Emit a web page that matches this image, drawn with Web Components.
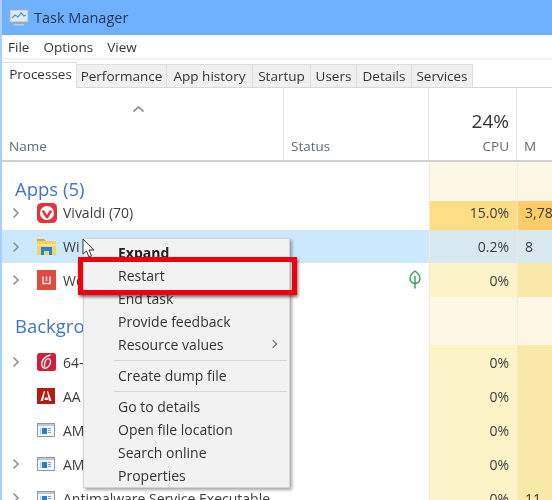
<!DOCTYPE html>
<html>
<head>
<meta charset="utf-8">
<title>Task Manager</title>
<style>
html,body{margin:0;padding:0;background:#fff;}
body{width:552px;height:500px;overflow:hidden;font-family:"Open Sans","Noto Sans",sans-serif;}
</style>
</head>
<body>
<tm-window>
  <tm-titlebar>Task Manager</tm-titlebar>
  <tm-menubar></tm-menubar>
  <tm-tabs></tm-tabs>
  <tm-header></tm-header>
  <tm-group label="Apps (5)" h="39" pad="14" cpu="#fdf7e6" mem="#fdf7e6"></tm-group>
  <tm-row h="29" lift="6" icon="vivaldi" name="Vivaldi (70)" arrow cpu-val="15.0%" mem-val="3,78" cpu="#fedd84" mem="#fdcc68"></tm-row>
  <tm-row h="33" icon="folder" name="Wi" arrow selected cpu-val="0.2%" mem-val="8" cpu="#d7e8ee" mem="#d7e8ee"></tm-row>
  <tm-row h="34" icon="square" name="We" arrow leaf cpu-val="0%" cpu="#fdf3c8" mem="#f9e9a8"></tm-row>
  <tm-group label="Backgro" h="48" pad="16" cpu="#fdf7e6" mem="#fdf7e6"></tm-group>
  <tm-row h="34" icon="red" name="64-" arrow cpu-val="0%" cpu="#fdf3c8" mem="#f9e9a8"></tm-row>
  <tm-row h="34" icon="adobe" name="AA" cpu-val="0%" cpu="#fdf3c8" mem="#f9e9a8"></tm-row>
  <tm-row h="34" icon="service" name="AM" cpu-val="0%" cpu="#fdf3c8" mem="#f9e9a8"></tm-row>
  <tm-row h="34" icon="service" name="AM" arrow cpu-val="0%" cpu="#fdf3c8" mem="#f9e9a8"></tm-row>
  <tm-row h="34" icon="service" name="Antimalware Service Executable" arrow cpu-val="0%" mem-val="11" cpu="#fdf3c8" mem="#f9e9a8"></tm-row>
  <tm-context-menu></tm-context-menu>
  <tm-highlight></tm-highlight>
  <tm-cursor></tm-cursor>
</tm-window>
<script>
const ICONS = {
    vivaldi: '<svg width="20" height="20" viewBox="0 0 20 20"><rect width="20" height="20" rx="4.500" fill="#e4333f"/><circle cx="10" cy="10" r="7" fill="#fff"/><path d="M6.200 7.300c1.200 0 1.600 1 2.100 1.900l1.700 2.800 1.700-2.800c.5-.9.500-1.900 1.900-1.900 1 0 1.500 1 1 2l-3.300 5.500c-.6 1-2 1-2.600 0L5.300 9.300c-.5-1 0-2 .9-2z" fill="#e4333f"/></svg>',
    folder: '<svg width="19" height="16" viewBox="0 0 19 16"><path d="M0 0h7l2 2h10v14H0z" fill="#f6d264"/><path d="M0 0h7l2 2H0z" fill="#dca832"/><path d="M0 5h19v2H0z" fill="#fbe59a"/><path d="M4 8h11v8h-3v-4H7v4H4z" fill="#1d86d8"/></svg>',
    square: '<svg width="19" height="20" viewBox="0 0 19 20"><rect width="19" height="20" fill="#dc4c3f"/><path d="M6 6.500v7h7v-7M9.500 6.500v4.500" fill="none" stroke="#f8e3e0" stroke-width="1.500"/></svg>',
    red: '<svg width="19" height="18" viewBox="0 0 19 18"><rect width="19" height="18" rx="2.500" fill="#cf1f3f"/><path d="M13.500 2C8 3 3.500 8 5 13c.7 2.500 4 3 6 1 2.500-2.500 3.500-6.500 1.500-8C10 4.500 7 8 7.500 14" fill="none" stroke="#fff" stroke-width="1.300"/></svg>',
    adobe: '<svg width="18" height="16" viewBox="0 0 18 16"><rect width="18" height="16" fill="#b71a12"/><path d="M3.500 13L7 3h1L6 13zM10 3h1l3.500 10H12zM8 9.500h2.500l1 2.500H7.500z" fill="#fff"/></svg>',
    service: '<svg width="18" height="14" viewBox="0 0 18 14"><rect x=".5" y=".5" width="17" height="13" fill="#f4f6f8" stroke="#8f98a3"/><rect x="1" y="1" width="16" height="2" fill="#bfc8d2"/><rect x="5" y="5" width="5" height="6" fill="#1b7fe0"/><rect x="11" y="5" width="3" height="1" fill="#7fa7d0"/><rect x="11" y="7" width="3" height="1" fill="#7fa7d0"/><rect x="11" y="9" width="3" height="1" fill="#7fa7d0"/><rect x="3" y="5" width="1" height="6" fill="#b6c9de"/></svg>'
};

customElements.define('tm-window', class extends HTMLElement {
    constructor() {
        super();
        this.attachShadow({ mode: 'open' }).innerHTML =
            '<style>:host{display:block;position:relative;width:552px;height:500px;overflow:hidden;background:#fff;font:14px "Open Sans","Noto Sans",sans-serif;color:#333;box-sizing:border-box;border-left:2px solid #a9d0fb;filter:blur(.35px);}</style><slot></slot>';
    }
});

customElements.define('tm-titlebar', class extends HTMLElement {
    constructor() {
        super();
        this.attachShadow({ mode: 'open' }).innerHTML =
            '<style>:host{display:flex;align-items:center;height:35px;margin-left:-2px;padding-left:9px;gap:5px;background:#6fb1ff;color:#1f3550;font-size:14.500px;}' +
            'svg{flex:none}</style>' +
            '<svg width="20" height="18" viewBox="0 0 20 18"><rect x="1" y="1" width="18" height="12" fill="#dfeaf3" stroke="#a9b7c2"/><path d="M3 9l3-3 3 2 3-4 3 3 2-1" fill="none" stroke="#3f9ad6" stroke-width="1.200"/><rect x="7" y="13" width="6" height="2" fill="#9aa7b0"/><rect x="5" y="15" width="10" height="1.500" fill="#c3cdd4"/></svg>' +
            '<span><slot></slot></span>';
    }
});

customElements.define('tm-menubar', class extends HTMLElement {
    constructor() {
        super();
        this.attachShadow({ mode: 'open' }).innerHTML =
            '<style>:host{display:flex;height:25px;box-sizing:border-box;align-items:center;padding-left:6px;gap:14px;border-bottom:2px solid #f2f2f2;font-size:13.500px;color:#333;}</style>' +
            '<span>File</span><span>Options</span><span>View</span>';
    }
});

customElements.define('tm-tabs', class extends HTMLElement {
    constructor() {
        super();
        const tabs = [['Performance', 90], ['App history', 86], ['Startup', 58], ['Users', 46], ['Details', 55], ['Services', 61]];
        this.attachShadow({ mode: 'open' }).innerHTML =
            '<style>:host{display:flex;align-items:flex-end;height:28px;border-bottom:1px solid #d9d9d9;box-sizing:border-box;font-size:13.500px;}' +
            '.tab{height:23px;line-height:23px;text-align:center;white-space:nowrap;background:#f0f0f0;border:1px solid #dedede;border-width:1px 1px 0 0;color:#333;box-sizing:border-box;}' +
            '.on{width:75px;height:26px;line-height:23px;margin-bottom:-1px;background:#fff;padding:0 0 3px 3px;}</style>' +
            '<div class="tab on">Processes</div>' + tabs.map(t => '<div class="tab" style="width:' + t[1] + 'px">' + t[0] + '</div>').join('');
    }
});

customElements.define('tm-header', class extends HTMLElement {
    constructor() {
        super();
        this.attachShadow({ mode: 'open' }).innerHTML =
            '<style>:host{display:grid;grid-template-columns:282px 145px 88px 35px;height:74px;box-sizing:border-box;border-bottom:2px solid #d0d0d0;color:#5f6b75;font-size:13.500px;}' +
            '.c{display:flex;flex-direction:column;justify-content:flex-end;padding-bottom:5px;border-right:1px solid #e4e4e4;box-sizing:border-box;position:relative;}' +
            '.name{padding-left:7px;}.status{padding-left:7px;}.cpu{text-align:right;padding-right:7px;}' +
            '.pct{font-size:19px;color:#333;line-height:24px;margin-bottom:4px;}' +
            '.sort{position:absolute;left:130px;top:17px;}</style>' +
            '<div class="c name"><svg class="sort" width="13" height="8" viewBox="0 0 13 8"><path d="M1.500 6.500L6.500 2l5 4.500" fill="none" stroke="#8b97a3" stroke-width="1.800"/></svg>Name</div>' +
            '<div class="c status">Status</div>' +
            '<div class="c cpu"><div class="pct">24%</div><div>CPU</div></div>' +
            '<div class="c" style="border:0;padding-left:7px">M</div>';
    }
});

customElements.define('tm-group', class extends HTMLElement {
    connectedCallback() {
        const a = n => this.getAttribute(n);
        this.attachShadow({ mode: 'open' }).innerHTML =
            '<style>:host{display:grid;grid-template-columns:427px 88px 35px;height:' + a('h') + 'px;}' +
            '.l{color:#3f74c9;font-size:18.500px;padding:' + a('pad') + 'px 0 0 13px;line-height:25px;box-sizing:border-box;overflow:hidden;white-space:nowrap;}' +
            '.cell{border-left:1px solid #f3ead0;}</style>' +
            '<div class="l">' + a('label') + '</div><div class="cell" style="background:' + a('cpu') + '"></div><div class="cell" style="background:' + a('mem') + '"></div>';
    }
});

customElements.define('tm-row', class extends HTMLElement {
    connectedCallback() {
        const a = n => this.getAttribute(n);
        const arrow = this.hasAttribute('arrow')
            ? '<svg width="8" height="12" viewBox="0 0 8 12"><path d="M1.500 1.500L6 6l-4.500 4.500" fill="none" stroke="#8c8c8c" stroke-width="1.500"/></svg>' : '';
        const leaf = this.hasAttribute('leaf')
            ? '<svg class="leaf" width="12" height="19" viewBox="0 0 12 19"><path d="M6 1C2.500 3.500 1 6 1 8.500a5 5 0 0 0 10 0C11 6 9.500 3.500 6 1zM6 6v12.500" fill="none" stroke="#2f9e56" stroke-width="1.400"/></svg>' : '';
        const lift = (a('lift') || 0) + 'px';
        this.attachShadow({ mode: 'open' }).innerHTML =
            '<style>:host{display:grid;grid-template-columns:427px 88px 35px;height:' + a('h') + 'px;font-size:14px;color:#3c3c3c;}' +
            '.main{display:flex;align-items:center;position:relative;padding-bottom:' + lift + ';box-sizing:border-box;' + (this.hasAttribute('selected') ? 'background:#cce8ff;' : '') + '}' +
            '.arrow{width:35px;padding-left:10px;box-sizing:border-box;display:flex;align-items:center;}' +
            '.icon{width:26px;display:flex;align-items:center;}' +
            '.name{white-space:nowrap;}' +
            '.leaf{position:absolute;left:407px;top:7px;}' +
            '.cell{display:flex;align-items:center;justify-content:flex-end;padding:0 8px ' + lift + ' 0;box-sizing:border-box;border-left:1px solid #f3ead0;}' +
            '.mem{justify-content:flex-start;padding:0 0 ' + lift + ' 7px;white-space:nowrap;overflow:hidden;}</style>' +
            '<div class="main"><div class="arrow">' + arrow + '</div><div class="icon">' + ICONS[a('icon')] + '</div><div class="name">' + a('name') + '</div>' + leaf + '</div>' +
            '<div class="cell" style="background:' + a('cpu') + '">' + (a('cpu-val') || '') + '</div>' +
            '<div class="cell mem" style="background:' + a('mem') + '">' + (a('mem-val') || '') + '</div>';
    }
});

customElements.define('tm-context-menu', class extends HTMLElement {
    constructor() {
        super();
        const groups = [
            [['Expand', 'bold'], ['Restart'], ['End task'], ['Provide feedback'], ['Resource values', 'sub']],
            [['Create dump file']],
            [['Go to details'], ['Open file location'], ['Search online'], ['Properties']]
        ];
        const item = i => '<div class="item ' + (i[1] || '') + '">' + i[0] + '</div>';
        this.attachShadow({ mode: 'open' }).innerHTML =
            '<style>:host{position:absolute;left:81px;top:238px;width:207px;box-sizing:border-box;padding:2px 0 0;background:#f2f2f2;border:1px solid #d4d4d4;box-shadow:2px 2px 3px rgba(0,0,0,.35);font-size:14px;color:#333;}' +
            '.item{height:23px;line-height:23px;padding-left:34px;position:relative;white-space:nowrap;}' +
            '.bold{font-weight:700;color:#222;}' +
            '.sub::after{content:"";position:absolute;right:13px;top:8px;width:5px;height:5px;border:solid #666;border-width:1px 1px 0 0;transform:rotate(45deg);}' +
            '.sep{height:1px;background:#d7d7d7;margin:4px 2px 3px 30px;}</style>' +
            groups.map(g => g.map(item).join('')).join('<div class="sep"></div>');
    }
});

customElements.define('tm-highlight', class extends HTMLElement {
    constructor() {
        super();
        this.attachShadow({ mode: 'open' }).innerHTML =
            '<style>:host{position:absolute;left:76px;top:257px;width:219px;height:38px;box-sizing:border-box;border:5px solid #ee0010;box-shadow:1px 2px 3px rgba(0,0,0,.55);}</style>';
    }
});

customElements.define('tm-cursor', class extends HTMLElement {
    constructor() {
        super();
        this.attachShadow({ mode: 'open' }).innerHTML =
            '<style>:host{position:absolute;left:80px;top:238px;line-height:0;}</style>' +
            '<svg width="13" height="20" viewBox="0 0 13 20"><path d="M1 1v15l3.500-3 2.500 6 2.500-1-2.500-6h5z" fill="#fff" stroke="#333" stroke-width="1"/></svg>';
    }
});
</script>
</body>
</html>
